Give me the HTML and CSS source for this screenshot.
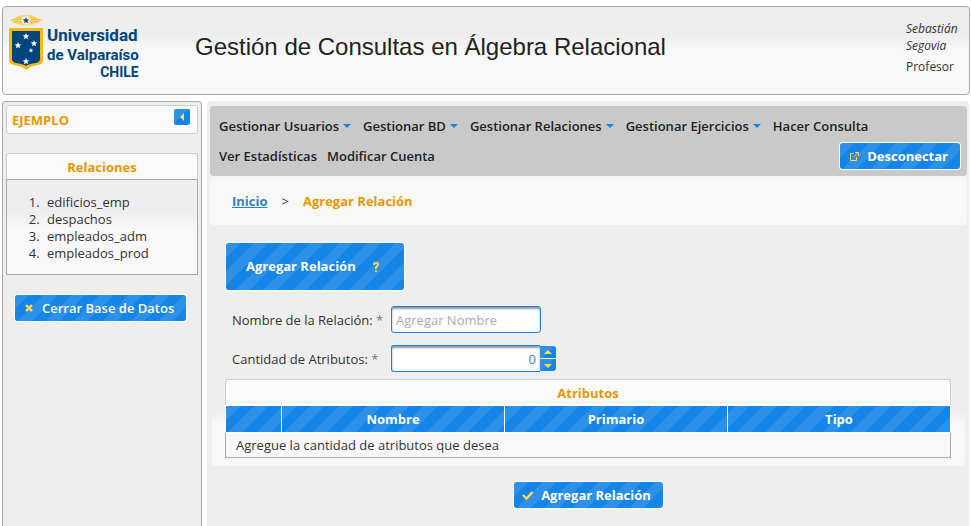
FILE: index.html
```html
<!DOCTYPE html>
<html lang="es">
<head>
<meta charset="utf-8">
<meta name="viewport" content="width=device-width, initial-scale=1">
<title>Gestión de Consultas en Álgebra Relacional</title>
<link rel="stylesheet" href="styles.css">
</head>
<body>
<header class="banner">
  <div class="logo">
    <svg class="crest" viewBox="0 0 34 56" aria-hidden="true">
      <path d="M0 5 C5 4 8 1 13 0 Q17 -1 21 0 C26 1 29 4 34 5 C29 8 25 10 20 10.500 H14 C9 10 5 8 0 5Z" fill="#f9d67c"/>
      <path d="M3 5 L12 4 M4 7 L12 6 M8 3 L13 3 M31 5 L22 4 M30 7 L22 6 M26 3 L21 3 M10 9 L13 7 M24 9 L21 7" stroke="#f0b42c" stroke-width="0.700"/>
      <circle cx="17" cy="5.200" r="4.200" fill="#fff3cf"/>
      <path d="M17 2l.9 2.300 2.400.1-1.900 1.500.7 2.400-2.100-1.400-2.100 1.400.7-2.400-1.900-1.500 2.400-.1z" fill="#0a4a82"/>
      <path d="M0 13H34V45Q34 49 29 50Q21 51 17 55Q13 51 5 50Q0 49 0 45Z" fill="#fdb913"/>
      <path d="M3 16H31V44Q31 47 27 48Q20 49 17 51Q14 49 7 48Q3 47 3 44Z" fill="#00457c"/>
      <g fill="#fff">
        <path id="star" d="M17 18l.9 2.300 2.400.1-1.900 1.500.7 2.400-2.100-1.400-2.100 1.400.7-2.400-1.900-1.500 2.400-.1z"/>
        <use href="#star" x="-8" y="9"/>
        <use href="#star" x="8" y="7"/>
        <use href="#star" x="0" y="25"/>
        <path d="M22 33l.6 1.600 1.700.1-1.300 1 .5 1.700-1.500-1-1.500 1 .5-1.700-1.300-1 1.700-.1z"/>
      </g>
    </svg>
    <div class="wordmark">
      <span>Universidad</span>
      <span class="city">de Valparaíso</span>
      <span class="country">CHILE</span>
    </div>
  </div>
  <h1>Gestión de Consultas en Álgebra Relacional</h1>
  <div class="user"><em>Sebastián Segovia</em><span>Profesor</span></div>
</header>

<div class="layout">
  <aside class="sidebar">
    <div class="panel-title">
      <span>EJEMPLO</span>
      <button class="collapse striped" type="button" aria-label="Contraer"><svg viewBox="0 0 16 16" width="16" height="16"><path d="M10 4v8L6 8z" fill="#ffe045"/></svg></button>
    </div>
    <section class="relations">
      <h2>Relaciones</h2>
      <ol>
        <li>edificios_emp</li>
        <li>despachos</li>
        <li>empleados_adm</li>
        <li>empleados_prod</li>
      </ol>
    </section>
    <button class="btn striped" type="button"><svg viewBox="0 0 16 16" width="16" height="16"><path d="M5 5l6 6M11 5l-6 6" stroke="#ffe045" stroke-width="2.400"/></svg>Cerrar Base de Datos</button>
  </aside>

  <main class="content">
    <nav class="menubar">
      <ul>
        <li><a href="#">Gestionar Usuarios<i class="caret"></i></a></li>
        <li><a href="#">Gestionar BD<i class="caret"></i></a></li>
        <li><a href="#">Gestionar Relaciones<i class="caret"></i></a></li>
        <li><a href="#">Gestionar Ejercicios<i class="caret"></i></a></li>
        <li><a href="#">Hacer Consulta</a></li>
      </ul>
      <div class="menu-row">
        <ul>
          <li><a href="#">Ver Estadísticas</a></li>
          <li><a href="#">Modificar Cuenta</a></li>
        </ul>
        <button class="btn striped" type="button"><svg viewBox="0 0 16 16" width="16" height="16" fill="none" stroke="#ffe045"><path d="M8 5.500H4.500v7h6V9M7 9.500l5-5M9 4.500h3.500V8"/></svg>Desconectar</button>
      </div>
    </nav>
    <div class="crumbs"><a href="#">Inicio</a><span>&gt;</span><strong>Agregar Relación</strong></div>

    <form class="form">
      <button class="btn help striped" type="button">Agregar Relación<svg viewBox="0 0 16 16" width="16" height="16" fill="none" stroke="#ffe045" stroke-width="1.800"><path d="M6 6V5q0-1 1-1h2q1 0 1 1v1.200L8 8.300V10M8 11.200V13"/></svg></button>
      <div class="field">
        <label for="nombre">Nombre de la Relación: <span>*</span></label>
        <input id="nombre" type="text" placeholder="Agregar Nombre">
      </div>
      <div class="field">
        <label for="cantidad">Cantidad de Atributos: <span>*</span></label>
        <input id="cantidad" class="amount" type="text" value="0">
        <div class="spin">
          <button class="striped" type="button" aria-label="Aumentar"><svg viewBox="0 0 16 12" width="16" height="12"><path d="M4 8h8L8 4z" fill="#ffe045"/></svg></button>
          <button class="striped" type="button" aria-label="Disminuir"><svg viewBox="0 0 16 12" width="16" height="12"><path d="M4 5h8L8 9z" fill="#ffe045"/></svg></button>
        </div>
      </div>
      <table>
        <caption>Atributos</caption>
        <colgroup><col class="narrow"><col><col><col></colgroup>
        <thead><tr class="striped"><th></th><th>Nombre</th><th>Primario</th><th>Tipo</th></tr></thead>
        <tbody><tr><td colspan="4">Agregue la cantidad de atributos que desea</td></tr></tbody>
      </table>
    </form>
    <div class="actions"><button class="btn striped" type="submit"><svg viewBox="0 0 16 16" width="16" height="16" fill="none" stroke="#ffe045" stroke-width="2.400"><path d="M3 8l3.500 3.500L12.500 5"/></svg>Agregar Relación</button></div>
  </main>
</div>
</body>
</html>
```
FILE: styles.css
```css
* { box-sizing: border-box; }

body {
  margin: 0;
  padding: 6px 1px 0 2px;
  min-height: 100vh;
  display: flex;
  flex-direction: column;
  gap: 6px;
  background: #fff;
  color: #333;
  font: 13px/17px "Open Sans", "Noto Sans", sans-serif;
}

h1, h2, ul, ol { margin: 0; padding: 0; }

button, input { font: inherit; }

.striped {
  background: repeating-linear-gradient(135deg, #2d90e9 0 10px, #1484e6 10px 20px);
}

.banner {
  display: flex;
  align-items: flex-start;
  height: 89px;
  padding: 8px 8px 0 6px;
  border: 1px solid #a8a8a8;
  border-radius: 4px;
  background: linear-gradient(#eee 33%, #f8f8f8 50%);
}

.logo { display: flex; gap: 4px; width: 186px; color: #00457c; }
.crest { width: 34px; height: 56px; }

.wordmark {
  display: flex;
  flex-direction: column;
  align-items: flex-start;
  padding-top: 10px;
  font: bold 17px/20px Roboto, "Liberation Sans", sans-serif;
  white-space: nowrap;
}
.wordmark .city { font-size: 15px; }
.wordmark .country {
  align-self: flex-end;
  font-size: 14px;
  line-height: 14px;
}

h1 {
  flex: 1;
  padding-top: 18px;
  color: #222;
  font: 24px/28px "Liberation Sans", sans-serif;
}

.user {
  display: flex;
  flex-direction: column;
  gap: 4px;
  width: 55px;
  padding-top: 5px;
  font-size: 12px;
}

.layout { flex: 1; display: flex; gap: 5px; padding-right: 1px; }

.sidebar {
  width: 200px;
  padding: 3px;
  border: 1px solid #a8a8a8;
  border-bottom: 0;
  border-radius: 4px 4px 0 0;
  background: #eee;
}
.sidebar > .btn { margin: 19px 0 0 8px; }

.panel-title {
  display: flex;
  justify-content: space-between;
  height: 29px;
  padding: 3px 7px 0 5px;
  border: 1px solid #ccc;
  border-radius: 3px;
  background: #fafafa;
  color: #e69700;
  font-weight: bold;
}
.panel-title span { line-height: 23px; }

.collapse { width: 16px; height: 16px; padding: 0; border: 0; border-radius: 2px; }
.collapse svg, .spin svg { display: block; }

.relations { margin-top: 19px; }
h2, caption {
  height: 26px;
  border: 1px solid #ccc;
  border-bottom: 0;
  border-radius: 3px 3px 0 0;
  background: linear-gradient(#fdfdfd, #f8f8f8);
  color: #e69700;
  font-size: 13px;
  font-weight: bold;
  line-height: 27px;
  text-align: center;
}
.relations ol {
  padding: 14px 0 12px 36px;
  border: 1px solid #a8a8a8;
  background: linear-gradient(#eee 33%, #f8f8f8 52%);
}
.relations li { padding-left: 4px; }

.btn {
  display: inline-flex;
  align-items: center;
  gap: 5px;
  height: 28px;
  padding: 0 12px 0 6px;
  border: 1px solid #fff;
  border-radius: 3px;
  background-clip: padding-box;
  color: #fff;
  font-weight: bold;
  white-space: nowrap;
}
.sidebar .btn { font-weight: 600; }

.content {
  flex: 1;
  min-width: 0;
  padding: 5px 2px 0 3px;
  border-radius: 4px 4px 0 0;
  background: #eee;
}

.menubar {
  padding: 5px 6px 5px 4px;
  border-radius: 4px;
  background: #c9c9c9;
}
.menubar ul { display: flex; list-style: none; }
.menubar a {
  display: flex;
  align-items: center;
  padding: 0 5px;
  color: #222;
  font-weight: 600;
  line-height: 30px;
  text-decoration: none;
  white-space: nowrap;
}
.caret {
  margin: 0 2px 0 4px;
  border: 4px solid transparent;
  border-top-color: #1484e6;
  border-bottom: 0;
}
.menu-row { display: flex; justify-content: space-between; align-items: center; }

.crumbs {
  display: flex;
  gap: 14px;
  height: 49px;
  padding: 17px 22px;
  border-radius: 4px;
  background: linear-gradient(#f4f4f4, #f8f8f8 8px);
  font-weight: bold;
}
.crumbs a { color: #2e83c2; }
.crumbs span { font-weight: normal; }
.crumbs strong { color: #e69700; font-weight: bold; }

.form {
  margin: 12px 2px 0;
  padding: 5px 14px 8px 13px;
  border-radius: 4px;
  background: linear-gradient(#eee 76%, #f8f8f8 82%);
}
.help { height: 49px; gap: 12px; padding: 0 20px; }

.field { display: flex; align-items: center; height: 27px; margin: 12px 0 0 7px; }
.help + .field { margin-top: 15px; }
.field label { width: 159px; line-height: 19px; padding-top: 2px; white-space: nowrap; }
.field label span { color: #777; }
.field input {
  width: 150px;
  height: 27px;
  padding: 0 4px;
  border: 1px solid #1484e6;
  border-radius: 3px;
  background: #fff;
  box-shadow: inset 0 2px 2px #999;
  color: #2e83e9;
}
.field .amount { width: 149px; text-align: right; border-right: 0; border-radius: 3px 0 0 3px; }
.field input::placeholder { color: #aaa; opacity: 1; }
.spin { display: grid; gap: 1px; border-radius: 0 3px 3px 0; overflow: hidden; background: #fff; }
.spin button { width: 16px; height: 12px; padding: 0; border: 0; }

table {
  width: 100%;
  margin-top: 7px;
  table-layout: fixed;
  border-collapse: collapse;
}
.narrow { width: 56px; }
th { height: 27px; padding: 0; border: 1px solid #fff; color: #fff; }
td { height: 25px; padding: 0 10px; border: 1px solid #a8a8a8; border-top: 0; background: #f8f8f8; }

.actions { padding-top: 15px; text-align: center; }
```
